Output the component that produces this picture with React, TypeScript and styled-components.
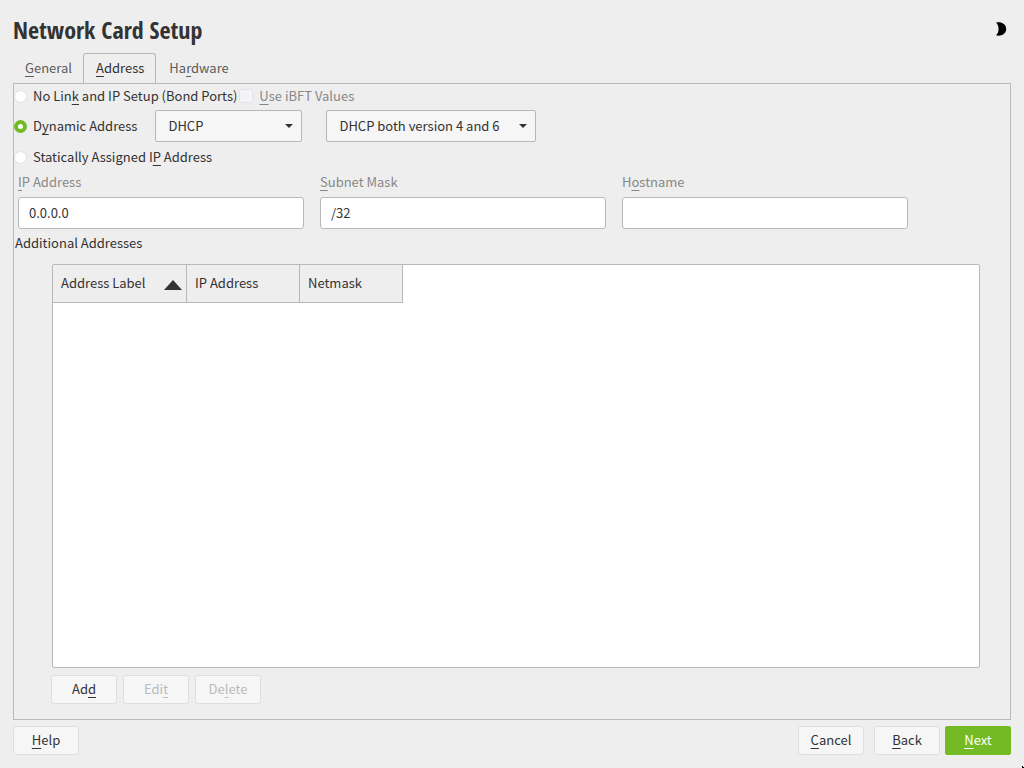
import React from "react";
import styled, { createGlobalStyle, css } from "styled-components";

const GlobalStyle = createGlobalStyle`
  *, *::before, *::after { box-sizing: border-box; }
  body {
    margin: 0;
    background: #eeeeee;
    color: #333333;
    font-family: "Noto Sans CJK SC", "Open Sans", sans-serif;
    font-size: 13px;
    line-height: 20px;
  }
  button, input, select { font: inherit; color: inherit; margin: 0; }
`;

const Window = styled.div`
  display: flex;
  flex-direction: column;
  min-height: 100vh;
  padding: 13px;
`;

const Header = styled.header`
  display: flex;
  justify-content: space-between;
  height: 40px;
`;

const Title = styled.h1`
  margin: 0;
  font-family: "Open Sans Condensed", "Noto Sans Condensed", "Liberation Sans Narrow", "Noto Sans CJK SC", sans-serif;
  font-size: 24px;
  line-height: 34px;
  font-weight: 700;
`;

const ThemeToggle = styled.button`
  display: flex;
  align-items: center;
  width: 18px;
  height: 32px;
  padding: 0;
  border: 0;
  background: none;
`;

const TabBar = styled.nav`
  display: flex;
  height: 31px;
  margin-bottom: -1px;
`;

const Tab = styled.button<{ $active?: boolean }>`
  padding: 0 12px 2px;
  border: 1px solid transparent;
  border-bottom: 0;
  background: none;
  color: #5c5c5c;
  white-space: nowrap;
  &:first-child { padding: 0 10px 2px 11px; }
  ${({ $active }) =>
    $active &&
    css`
      padding: 0 11px 2px 12px;
      border-color: #b8b8b8;
      border-radius: 3px 3px 0 0;
      background: #eeeeee;
      color: #333333;
    `}
`;

const Panel = styled.main`
  display: flex;
  flex: 1;
  flex-direction: column;
  padding-bottom: 15px;
  border: 1px solid #b8b8b8;
`;

const Row = styled.div<{ $height: number; $after?: number }>`
  display: flex;
  align-items: center;
  gap: 2px;
  min-height: ${({ $height }) => $height}px;
  margin-bottom: ${({ $after = 0 }) => $after}px;
`;

const Mnemonic = styled.span`
  text-decoration: underline;
  text-decoration-thickness: 1px;
  text-decoration-skip-ink: none;
  text-underline-offset: 3px;
`;

const Choice = styled.label<{ $muted?: boolean }>`
  display: flex;
  align-items: center;
  gap: 6px;
  color: ${({ $muted }) => ($muted ? "#888888" : "inherit")};
  white-space: nowrap;
`;

const Radio = styled.input`
  appearance: none;
  width: 13px;
  height: 13px;
  border: 1px solid #dfe1ea;
  border-radius: 50%;
  background: #ffffff;
  &:checked {
    border: 4px solid #73ba25;
  }
`;

const CheckBox = styled.input`
  appearance: none;
  width: 14px;
  height: 14px;
  border: 1px solid #dfe3ec;
  border-radius: 2px;
  background: #f4f4f5;
`;

const Options = styled.div`
  display: flex;
  gap: 24px;
  margin-left: 16px;
`;

const SelectBox = styled.div<{ $width: number }>`
  display: grid;
  align-items: center;
  width: ${({ $width }) => $width}px;
  > * { grid-area: 1 / 1; }
  > svg {
    justify-self: end;
    margin-right: 9px;
    pointer-events: none;
  }
`;

const Select = styled.select`
  appearance: none;
  width: 100%;
  height: 32px;
  padding: 0 24px 0 12px;
  border: 1px solid #b8b8b8;
  border-radius: 2px;
  background: #f6f6f6;
`;

const Fields = styled.div`
  display: flex;
  gap: 16px;
  padding: 0 102px 0 4px;
`;

const Field = styled.label`
  display: flex;
  flex: 1;
  flex-direction: column;
  gap: 5px;
  min-width: 0;
  color: #888888;
`;

const TextInput = styled.input`
  width: 100%;
  height: 32px;
  padding: 0 10px 2px;
  border: 1px solid #b8b8b8;
  border-radius: 3px;
  background: #ffffff;
  color: #333333;
`;

const SectionLabel = styled.h2`
  margin: 0 0 7px;
  padding: 4px 1px;
  font-size: 13px;
  line-height: 20px;
  font-weight: 400;
`;

const TableFrame = styled.div`
  flex: 1;
  margin: 0 30px 7px 38px;
  border: 1px solid #b8b8b8;
  border-radius: 2px;
  background: #ffffff;
`;

const Table = styled.table`
  table-layout: fixed;
  width: 350px;
  border-collapse: separate;
  border-spacing: 0;
`;

const HeadCell = styled.th<{ $width: number }>`
  width: ${({ $width }) => $width}px;
  height: 38px;
  padding: 0 3px 2px 8px;
  border-right: 1px solid #b8b8b8;
  border-bottom: 1px solid #b8b8b8;
  background: #eeeeee;
  font-weight: 400;
  text-align: left;
`;

const HeadContent = styled.div`
  display: flex;
  align-items: center;
  justify-content: space-between;
`;

const Button = styled.button<{ $primary?: boolean }>`
  min-width: 66px;
  height: 29px;
  padding: 0 8px 2px;
  border: 1px solid #dedede;
  border-radius: 3px;
  background: #f6f6f6;
  &:disabled { color: #bbbbbb; }
  ${({ $primary }) =>
    $primary &&
    css`
      border-color: #73ba25;
      border-radius: 2px;
      background: #73ba25;
      color: #ffffff;
    `}
`;

const TableActions = styled.div`
  display: flex;
  gap: 6px;
  margin-left: 37px;
`;

const Footer = styled.footer`
  display: flex;
  justify-content: space-between;
  margin-top: 6px;
`;

const FooterGroup = styled.div<{ $gap: number }>`
  display: flex;
  gap: ${({ $gap }) => $gap}px;
`;

const Pointer = styled.svg`
  position: fixed;
  right: 0;
  bottom: 0;
`;

/* Text with one underlined accelerator letter, marked by a preceding "&". */
function Accel({ text }: { text: string }) {
  const at = text.indexOf("&");
  if (at < 0) return <span>{text}</span>;
  return (
    <span>
      {text.slice(0, at)}
      <Mnemonic>{text[at + 1]}</Mnemonic>
      {text.slice(at + 2)}
    </span>
  );
}

function DropDown({ label, value, width }: { label: string; value: string; width: number }) {
  return (
    <SelectBox $width={width}>
      <Select aria-label={label} defaultValue={value}>
        <option>{value}</option>
      </Select>
      <svg width="8" height="4" viewBox="0 0 8 4" aria-hidden="true">
        <path d="M0 0H8L4 4Z" fill="#333333" />
      </svg>
    </SelectBox>
  );
}

export default function App() {
  return (
    <>
      <GlobalStyle />
      <Window>
        <Header>
          <Title>Network Card Setup</Title>
          <ThemeToggle type="button" aria-label="Toggle dark mode">
            <svg width="14" height="14" viewBox="0 0 14 14" aria-hidden="true">
              <path d="M3 0.8C7 -0.6 13.2 1.4 13.2 7S7 14.6 3 13.2C6.4 11 6.4 3 3 0.8Z" fill="#000000" />
            </svg>
          </ThemeToggle>
        </Header>
        <TabBar>
          <Tab type="button"><Accel text="&General" /></Tab>
          <Tab type="button" $active><Accel text="&Address" /></Tab>
          <Tab type="button"><Accel text="Ha&rdware" /></Tab>
        </TabBar>
        <Panel>
          <Row $height={24} $after={2}>
            <Choice>
              <Radio type="radio" name="setup" />
              <Accel text="No Lin&k and IP Setup (Bond Ports)" />
            </Choice>
            <Choice $muted>
              <CheckBox type="checkbox" disabled />
              <Accel text="&Use iBFT Values" />
            </Choice>
          </Row>
          <Row $height={32}>
            <Choice>
              <Radio type="radio" name="setup" defaultChecked />
              <Accel text="D&ynamic Address" />
            </Choice>
            <Options>
              <DropDown label="Protocol" value="DHCP" width={147} />
              <DropDown label="DHCP version" value="DHCP both version 4 and 6" width={210} />
            </Options>
          </Row>
          <Row $height={30}>
            <Choice>
              <Radio type="radio" name="setup" />
              <Accel text="Statically Assigned I&P Address" />
            </Choice>
          </Row>
          <Fields>
            <Field>
              <Accel text="&IP Address" />
              <TextInput type="text" defaultValue="0.0.0.0" />
            </Field>
            <Field>
              <Accel text="&Subnet Mask" />
              <TextInput type="text" defaultValue="/32" />
            </Field>
            <Field>
              <Accel text="H&ostname" />
              <TextInput type="text" />
            </Field>
          </Fields>
          <SectionLabel>Additional Addresses</SectionLabel>
          <TableFrame>
            <Table>
              <thead>
                <tr>
                  <HeadCell $width={134} aria-sort="ascending">
                    <HeadContent>
                      Address Label
                      <svg width="20" height="14" viewBox="0 0 20 14" aria-hidden="true">
                        <path d="M1 14L10 4L19 14Z" fill="#333333" />
                      </svg>
                    </HeadContent>
                  </HeadCell>
                  <HeadCell $width={113}>IP Address</HeadCell>
                  <HeadCell $width={103}>Netmask</HeadCell>
                </tr>
              </thead>
            </Table>
          </TableFrame>
          <TableActions>
            <Button type="button"><Accel text="Ad&d" /></Button>
            <Button type="button" disabled><Accel text="Edi&t" /></Button>
            <Button type="button" disabled><Accel text="De&lete" /></Button>
          </TableActions>
        </Panel>
        <Footer>
          <Button type="button"><Accel text="&Help" /></Button>
          <FooterGroup $gap={5}>
            <FooterGroup $gap={10}>
              <Button type="button"><Accel text="&Cancel" /></Button>
              <Button type="button"><Accel text="&Back" /></Button>
            </FooterGroup>
            <Button type="button" $primary><Accel text="&Next" /></Button>
          </FooterGroup>
        </Footer>
      </Window>
      <Pointer width="2" height="2" viewBox="0 0 2 2" aria-hidden="true">
        <path d="M0 0H1V1H2V2H0Z" fill="#000000" />
      </Pointer>
    </>
  );
}
